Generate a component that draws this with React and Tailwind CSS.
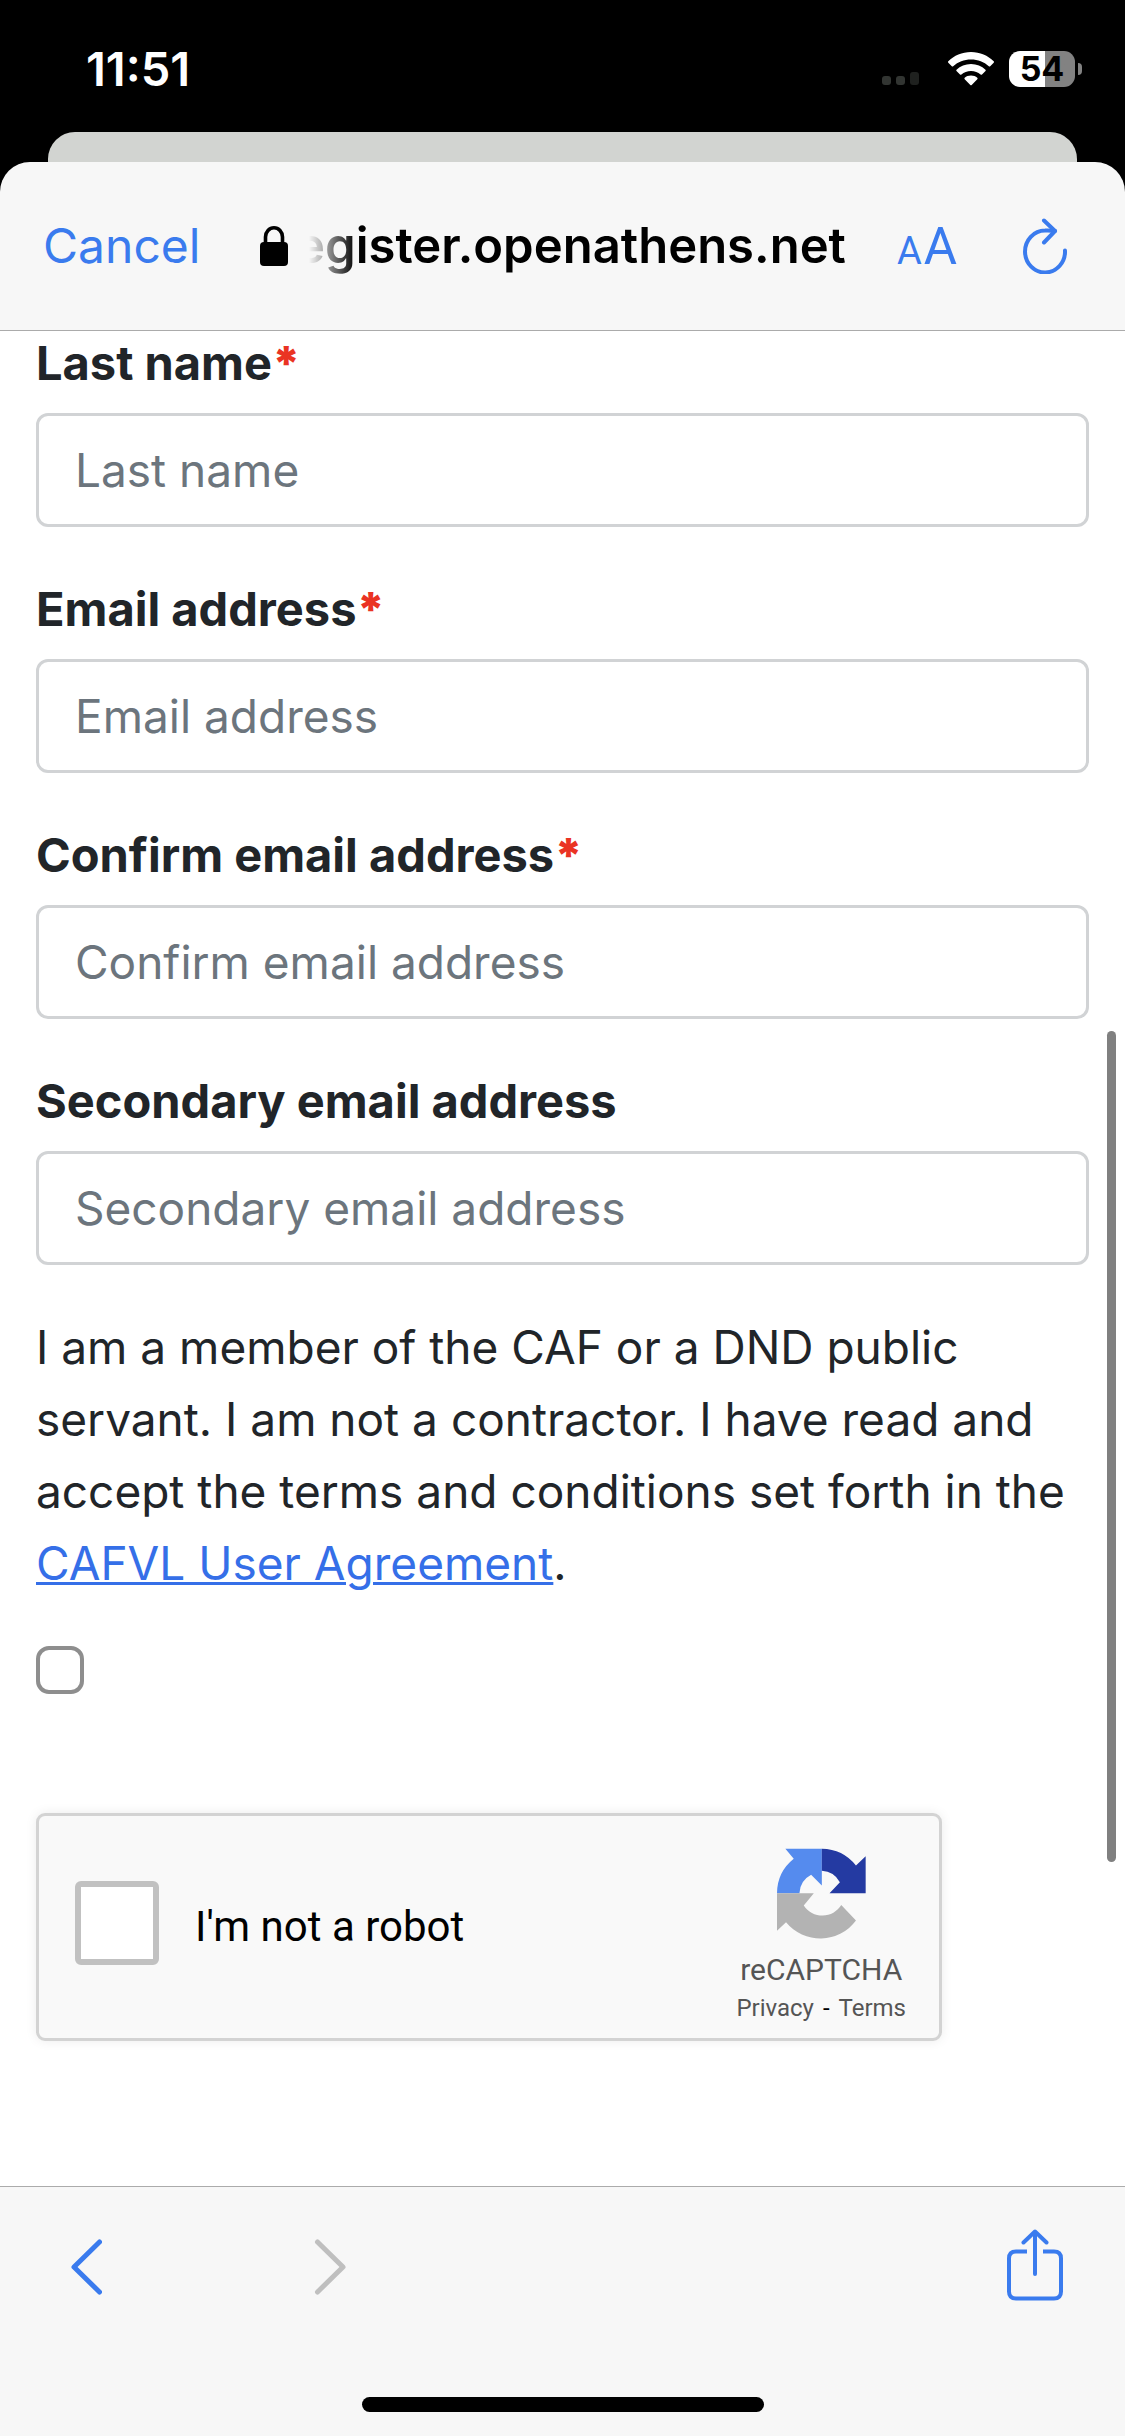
import { useState } from 'react';

const fields = [
  { id: 'lastName', label: 'Last name', type: 'text', required: true },
  { id: 'email', label: 'Email address', type: 'email', required: true },
  { id: 'confirmEmail', label: 'Confirm email address', type: 'email', required: true },
  { id: 'secondaryEmail', label: 'Secondary email address', type: 'email', required: false },
];

const WifiIcon = () => (
  <svg viewBox="0 0 46 34" className="w-[46px] h-[34px]" fill="#fff">
    <path d="M23 0C14 0 6 3.600 0.300 9.300Q-.3 10 .3 10.700L3.800 14.200Q4.500 14.800 5.200 14.200C10 9.800 16 7.500 23 7.500S36 9.800 40.800 14.200Q41.500 14.800 42.200 14.200L45.700 10.700Q46.300 10 45.700 9.300C40 3.600 32 0 23 0Z" />
    <path d="M23 12C17.300 12 12.300 14.200 8.500 17.700Q7.900 18.400 8.500 19L12 22.500Q12.700 23.100 13.400 22.500C16 20.200 19.200 19 23 19S30 20.200 32.600 22.500Q33.300 23.100 34 22.500L37.500 19Q38.100 18.400 37.500 17.700C33.700 14.200 28.700 12 23 12Z" />
    <path d="M23 23.500C20.500 23.500 18.300 24.400 16.700 25.800Q16 26.500 16.700 27.200L22.300 32.900Q23 33.500 23.700 32.900L29.300 27.200Q30 26.500 29.300 25.800C27.700 24.400 25.500 23.500 23 23.500Z" />
  </svg>
);

const LockIcon = () => (
  <svg viewBox="0 0 28 40" className="w-[28px] h-[40px] shrink-0">
    <rect x="0" y="16" width="28" height="24" rx="4" fill="#000" />
    <path d="M5.500 18V11a8.500 9.200 0 0 1 17 0v7" fill="none" stroke="#000" strokeWidth="3.600" />
  </svg>
);

const ReloadIcon = () => (
  <svg viewBox="0 0 46 56" className="w-[46px] h-[56px]" fill="none" stroke="currentColor" strokeWidth="4" strokeLinecap="round" strokeLinejoin="round">
    <path d="M43 32.500A20 21 0 1 1 23 12.500C27 12.300 30 12.500 33 13" />
    <path d="M22 2.500L33 13L22 24.500" />
  </svg>
);

const ShareIcon = () => (
  <svg viewBox="0 0 56 72" className="w-[56px] h-[72px]" fill="none" stroke="currentColor" strokeWidth="4">
    <path d="M20 22.500H9Q2 22.500 2 29.500V62.500Q2 69.500 9 69.500H47Q54 69.500 54 62.500V29.500Q54 22.500 47 22.500H36" />
    <path d="M28 45V2.500M16.500 13.500L28 2.500L39.500 13.500" strokeLinecap="round" strokeLinejoin="round" />
  </svg>
);

const RecaptchaLogo = () => (
  <svg viewBox="0 0 266 272" className="w-[89px] h-[91px]">
    <path fill="#558bee" d="M25 2H134V112L102 80A66 66 0 0 0 67 135H0A133 133 0 0 1 50 32Z" />
    <path fill="#243aa2" d="M134 2A133 133 0 0 1 236 52L265 25V135H157L188 102A66 66 0 0 0 134 68Z" />
    <path fill="#b3b3b3" d="M0 135H110L80 172A66 66 0 0 0 192 170L236 217A133 133 0 0 1 27 222L0 247Z" />
  </svg>
);

const StatusBar = () => (
  <div className="flex items-center justify-between h-[132px] pt-[6px] pl-[86px] pr-[43px] text-white">
    <span className="text-[47px] leading-[54px] font-semibold">11:51</span>
    <div className="flex items-center">
      <div className="flex items-end gap-[5px] h-[32px] mr-[29px]">
        <span className="w-[9px] h-[9px] rounded-[3px] bg-[#323532]" />
        <span className="w-[9px] h-[9px] rounded-[3px] bg-[#323532]" />
        <span className="w-[9px] h-[13px] rounded-[3px] bg-[#1f211f]" />
      </div>
      <WifiIcon />
      <div className="flex items-center justify-center w-[66px] h-[36px] ml-[15px] rounded-[11px] bg-linear-to-r from-white from-55% to-[#828282] to-55% text-[34px] leading-[36px] font-bold text-black">
        54
      </div>
      <span className="w-[4px] h-[12px] ml-[3px] rounded-r-full bg-[#828282]" />
    </div>
  </div>
);

const BrowserHeader = () => (
  <header className="flex items-center h-[169px] pl-[43px] pr-[57px] bg-[#f7f7f7] border-b border-[#ababab] rounded-t-[30px]">
    <button type="button" className="text-[48px] leading-[60px] text-[#3a7bee]">Cancel</button>
    <div className="flex flex-1 items-center min-w-0 ml-[60px] gap-[21px]">
      <LockIcon />
      <div className="flex flex-1 justify-end overflow-hidden text-[49px] leading-[60px] font-semibold text-black mask-l-from-[490px] mask-l-to-100%">
        register.openathens.net
      </div>
    </div>
    <button type="button" aria-label="Text size" className="flex items-baseline gap-[2px] ml-[51px] pt-[6px] font-[Roboto] text-[#3a7bee] leading-[60px]">
      <span className="text-[38px]">A</span>
      <span className="text-[51px]">A</span>
    </button>
    <button type="button" aria-label="Reload" className="ml-[65px] text-[#3a7bee]">
      <ReloadIcon />
    </button>
  </header>
);

const Field = ({ id, label, type, required }) => (
  <div className="flex flex-col gap-[18px]">
    <label htmlFor={id} className="text-[47px] leading-[64px] font-bold text-[#212529]">
      {label}
      {required && <span className="font-black text-[#ea3323]">*</span>}
    </label>
    <input
      id={id}
      type={type}
      placeholder={label}
      className="w-full h-[114px] px-[36px] rounded-[12px] border-[3px] border-[#d1d3d5] bg-white text-[46px] text-[#212529] placeholder:text-[#6c757d] placeholder:opacity-100"
    />
  </div>
);

const Recaptcha = () => {
  const [checked, setChecked] = useState(false);

  return (
    <div className="flex items-start justify-between w-[906px] h-[228px] mt-[119px] pl-[36px] pr-[33px] rounded-[9px] border-[3px] border-[#d3d3d3] bg-[#f9f9f9] shadow-[0_0_12px_rgba(0,0,0,0.08)] font-[Roboto]">
      <div className="flex items-center gap-[36px] mt-[65px]">
        <input
          id="robot"
          type="checkbox"
          checked={checked}
          onChange={(e) => setChecked(e.target.checked)}
          className="appearance-none w-[84px] h-[84px] rounded-[6px] border-[6px] border-[#c1c1c1] bg-white checked:bg-[#c1c1c1]"
        />
        <label htmlFor="robot" className="pt-[8px] text-[42px] leading-[50px] text-black">I'm not a robot</label>
      </div>
      <div className="flex flex-col items-center mt-[32px] text-[#555]">
        <RecaptchaLogo />
        <span className="mt-[12px] text-[30px] leading-[38px]">reCAPTCHA</span>
        <div className="flex gap-[9px] text-[24px] leading-[38px]">
          <a href="#privacy">Privacy</a>
          <span className="text-black">-</span>
          <a href="#terms">Terms</a>
        </div>
      </div>
    </div>
  );
};

const BottomBar = () => (
  <footer className="flex flex-col bg-[#f7f7f7] border-t border-[#ababab]">
    <div className="flex items-center h-[160px] pl-[70px] pr-[62px]">
      <button type="button" aria-label="Back" className="text-[#3a7bee]">
        <svg viewBox="0 0 32 56" className="w-[32px] h-[56px]" fill="none" stroke="currentColor" strokeWidth="5" strokeLinecap="round" strokeLinejoin="round">
          <path d="M29.500 3L4 28L29.500 53" />
        </svg>
      </button>
      <button type="button" aria-label="Forward" disabled className="ml-[212px] text-[#bfbfbf]">
        <svg viewBox="0 0 32 56" className="w-[32px] h-[56px]" fill="none" stroke="currentColor" strokeWidth="5" strokeLinecap="round" strokeLinejoin="round">
          <path d="M3.500 3L29 28L3.500 53" />
        </svg>
      </button>
      <button type="button" aria-label="Share" className="ml-auto pb-[4px] text-[#3a7bee]">
        <ShareIcon />
      </button>
    </div>
    <div className="w-[402px] h-[15px] mt-[50px] mb-[24px] mx-auto rounded-full bg-black" />
  </footer>
);

const App = () => {
  const [agreed, setAgreed] = useState(false);

  return (
    <div className="flex flex-col min-h-screen bg-black font-[Inter,sans-serif]">
      <StatusBar />
      <div className="h-[30px] mx-[48px] rounded-t-[27px] bg-[#d2d4d1]" />
      <div className="flex flex-col flex-1 bg-black">
        <BrowserHeader />
        <main className="relative flex-1 px-[36px] bg-white">
          <form className="flex flex-col" onSubmit={(e) => e.preventDefault()}>
            <div className="flex flex-col gap-[50px]">
              {fields.map((field) => (
                <Field key={field.id} {...field} />
              ))}
            </div>
            <label htmlFor="agreement" className="mt-[46px] text-[46px] leading-[72px] text-[#212529]">
              I am a member of the CAF or a DND public servant. I am not a contractor. I have read and accept the terms and
              conditions set forth in the{' '}
              <a href="#agreement" className="text-[#356fe8] underline decoration-[3px]">CAFVL User Agreement</a>.
            </label>
            <input
              id="agreement"
              type="checkbox"
              checked={agreed}
              onChange={(e) => setAgreed(e.target.checked)}
              className="appearance-none w-[48px] h-[48px] mt-[47px] rounded-[13px] border-[4px] border-[#8e8e8e] bg-white checked:bg-[#3a7bee]"
            />
            <Recaptcha />
          </form>
          {/* scroll indicator floats over the page */}
          <div className="absolute right-[9px] top-[700px] w-[9px] h-[831px] rounded-full bg-[#808080]" />
        </main>
        <BottomBar />
      </div>
    </div>
  );
};

export default App;
